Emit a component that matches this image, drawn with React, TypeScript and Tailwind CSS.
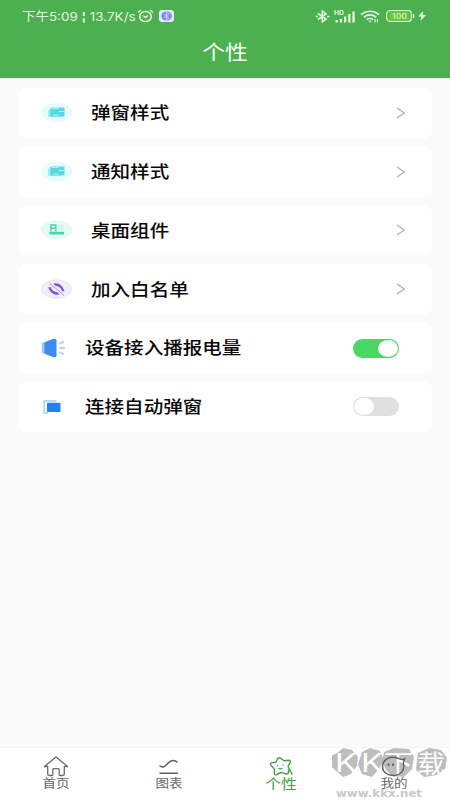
import { useState } from 'react'
import type { ReactNode } from 'react'

const FONT = "font-['Inter','Noto_Sans_CJK_SC',sans-serif]"

function CardIcon() {
  return (
    <svg width="32" height="20" viewBox="0 0 32 20">
      <ellipse cx="16.500" cy="9.500" rx="15.300" ry="9" fill="#e9fcfd" stroke="#dcf7f9" strokeWidth=".7" />
      <rect x="8" y="6.500" width="13" height="7.500" rx="1" fill="#a5eff3" />
      <rect x="10.300" y="4.500" width="14.200" height="9" rx=".8" fill="#58d8e1" />
      <path d="M11 5.300h8M19 8.500h5M13 12h6" stroke="#b5f3f6" strokeWidth="1" />
    </svg>
  )
}

function WidgetIcon() {
  return (
    <svg width="32" height="20" viewBox="0 0 32 20">
      <ellipse cx="16.500" cy="10" rx="15.300" ry="9" fill="#e5faf5" stroke="#d9f5ee" strokeWidth=".7" />
      <path d="M10.800 11.500V5h5v6.500M10.800 8.300h5" stroke="#50d0a8" strokeWidth="1.400" fill="none" />
      <path d="M18 5h5v1.500h-5zM18 8h5v1.200h-5z" fill="#c3f1e3" />
      <rect x="9.500" y="11.800" width="14.500" height="2.700" fill="#50d0a8" />
    </svg>
  )
}

function WhitelistIcon() {
  return (
    <svg width="32" height="20" viewBox="0 0 32 20">
      <ellipse cx="16.500" cy="10" rx="15.300" ry="9.300" fill="#f1edfb" stroke="#e7e0f7" strokeWidth=".7" />
      <path d="M13.500 4.500c5-1.200 9 1.500 11 7.500l-2.300.4c-1.200-3.700-3.700-5.400-7-5.700zM19.500 15.500c-5 1.200-9.300-1.500-11.300-7l2.300-.4c1.500 3.400 3.800 4.900 7 5.200z" fill="#7660cc" />
      <path d="M9.500 4l14.500 12.500" stroke="#a296dc" strokeWidth="1" />
    </svg>
  )
}

function SpeakerIcon() {
  return (
    <svg width="26" height="20" viewBox="0 0 26 20">
      <path d="M2 4.500h4v11H2.500Q1.800 15.500 1.800 14.500V5Z" fill="#94c5fb" />
      <path d="M4.500 4.300 13.500.8q3-.6 3 1.500v15.400q0 2.200-3 1.500L4.500 15.700Z" fill="#3d8bf3" />
      <path d="M19 6l5-2.600M19.300 10h5.500M19 14l5 2.300" stroke="#9cc6ee" strokeWidth="1.300" />
    </svg>
  )
}

function WindowIcon() {
  return (
    <svg width="20" height="16" viewBox="0 0 20 16" className="ml-[2px]">
      <path d="M14 2H2.200v12H6" fill="none" stroke="#b5d7fb" strokeWidth="1.800" />
      <rect x="5" y="3.800" width="13.500" height="9.200" rx=".8" fill="#2680f4" />
    </svg>
  )
}

function Toggle({ on, onClick }: { on: boolean; onClick: () => void }) {
  return (
    <button
      onClick={onClick}
      className={`flex h-[19px] w-[46px] items-center rounded-full px-px ${on ? 'justify-end bg-[#4bd763]' : 'justify-start bg-[#e0e0e0]'}`}
    >
      <span className="h-[17px] w-[20px] rounded-[50%] bg-white" />
    </button>
  )
}

function Row({ icon, label, children, wide }: { icon: ReactNode; label: string; children: ReactNode; wide?: boolean }) {
  return (
    <div className="flex h-[49.8px] items-center rounded-lg bg-white pl-[22px] pr-[33px]">
      <div className={`flex shrink-0 items-center ${wide ? 'w-[45px]' : 'w-[51px]'}`}>{icon}</div>
      <span className="origin-left scale-x-[1.15] whitespace-nowrap pt-[2px] text-[17px] font-medium text-[#080808]">{label}</span>
      <div className="ml-auto">{children}</div>
    </div>
  )
}

function Chevron() {
  return (
    <svg width="10" height="12" viewBox="0 0 10 12" className="mr-[-7px]">
      <path d="M1 1l7.200 5L1 11" fill="none" stroke="#b4b4b4" strokeWidth="1.400" />
    </svg>
  )
}

function StatusBar() {
  return (
    <div className="flex h-8 items-center pl-[22px] pr-[24px] text-[#e2f7df]">
      <div className="w-[113px]">
        <span className="block w-max origin-left scale-x-[1.120] whitespace-nowrap pt-px text-[12px] leading-none">
          下午5:09 <b>¦</b> 13.7K/s
        </span>
      </div>
      <svg width="17" height="14" viewBox="0 0 17 14" className="ml-[2px]" fill="none" stroke="currentColor" strokeWidth="1.500">
        <ellipse cx="8.500" cy="7.500" rx="5.800" ry="5.100" />
        <path d="M1 3.500 4 1M16 3.500 13 1M6 6.500l2.500 2L11 6.500" />
      </svg>
      <svg width="15" height="12" viewBox="0 0 15 12" className="ml-[5px]">
        <rect width="15" height="12" rx="3" fill="#dcecff" />
        <ellipse cx="7.500" cy="6" rx="5.300" ry="4.600" fill="#8585e8" />
        <path d="M5 4l5 4-2.500 1.700V2.300L10 4 5 8" fill="none" stroke="#d4d4ff" strokeWidth=".8" />
      </svg>
      <svg width="15" height="13" viewBox="0 0 15 13" className="ml-auto" fill="none" stroke="currentColor" strokeWidth="1.600">
        <path d="M3 3.500 11 9l-3.700 3V1L11 4 3 9.500M.7 6.500h2.300M12 6.500h2.500" />
      </svg>
      <svg width="22" height="13" viewBox="0 0 22 13" className="ml-[4px]" fill="currentColor">
        <text x="0" y="5" fontSize="5.500" fontWeight="700" textLength="10" lengthAdjust="spacingAndGlyphs">HD</text>
        <path d="M1.500 10h2.300v2.500H1.500zM5.800 9h2.300v3.500H5.800zM10 6.500h2.300v6H10zM14.200 4h2.300v8.500h-2.300zM18.400 1.500h2.300v11h-2.300z" />
      </svg>
      <svg width="20" height="13" viewBox="0 0 20 13" className="ml-[4px]" fill="none" stroke="currentColor" strokeWidth="1.700">
        <path d="M1 4.500Q10-2 19 4.500M3.800 7.200q6.200-4.500 12.400 0M6.700 9.600q3.300-2.200 6.600 0" />
        <path d="M8.300 10.800h3.400L10 12.600z" fill="currentColor" stroke="none" />
        <path d="M15 9v3.500M17.500 9v3.500" strokeWidth="1.100" />
      </svg>
      <svg width="29" height="12" viewBox="0 0 29 12" className="ml-[6px]">
        <rect x=".7" y=".7" width="24.600" height="10.600" rx="3" fill="none" stroke="#d8f5cb" strokeWidth="1.200" />
        <rect x="2.500" y="2.300" width="21" height="7.400" rx="1.500" fill="#6ac837" />
        <text x="6" y="8.700" fontSize="7.500" fontWeight="500" fill="#d5f7bd" textLength="15" lengthAdjust="spacingAndGlyphs">100</text>
        <path d="M27.500 4v4" stroke="#d8f5cb" strokeWidth="1.600" />
      </svg>
      <svg width="8" height="10" viewBox="0 0 8 10" className="ml-[3px]">
        <path d="M5 0 .2 5.600h3L2.500 10 8 4H4.800z" fill="currentColor" />
      </svg>
    </div>
  )
}

function HomeIcon() {
  return (
    <svg width="26" height="21" viewBox="0 0 26 21" fill="none" stroke="#6a6a6a" strokeWidth="1.300" strokeLinejoin="round">
      <path d="M13 1 1.500 10.500h3.200V18q0 1.500 1.500 1.500h2.600q1 0 1-1v-4.800q0-1 1-1h4.400q1 0 1 1v4.800q0 1 1 1h2.600q1.500 0 1.500-1.500v-7.500h3.200z" />
    </svg>
  )
}

function ChartIcon() {
  return (
    <svg width="22" height="16" viewBox="0 0 22 16" fill="none" stroke="#626262" strokeWidth="1.500">
      <path d="M1.500 6.500c6 5.500 8-6 14-5 2 .2 2.800 1 4 1.800M1.500 14.200h18.500" />
    </svg>
  )
}

function StarIcon() {
  return (
    <svg width="24" height="19" viewBox="0 0 24 19" fill="none" stroke="#43a047" strokeWidth="1.400" strokeLinejoin="round">
      <path d="M19.500 12.500V15q0 2.500-2.700 1.800l-4.500-1.500-4.500 2.200q-2.600.8-2.500-1.600l.2-3.800L2 8.200Q.8 6 3 5.600l4-.3 1.500-3.500Q10 0 12 1.500l3 2.300 4.800-.5q2.300.3 1.200 2.600l-2 3.600 4.300 8.200" />
      <path d="M8.500 8v1.300M14 7.500v1.300M9.500 11.300q2 1.200 3.700-.3" strokeWidth="1.100" />
    </svg>
  )
}

function MineIcon() {
  return (
    <svg width="25" height="21" viewBox="0 0 25 21" fill="none" stroke="#5e5e5e" strokeWidth="1.400">
      <path d="M17.500 2.500C9-1 1.500 3.500 1.500 10.500c0 5.500 4.500 9 10.800 9 7.200 0 12-5 10-12 .2-2 .9-3.300 1.300-4.700-2 .9-4 .8-6.100-.3z" />
      <path d="M7.500 7.500v2.500M12 7.500v2.500" strokeWidth="1.700" />
    </svg>
  )
}

const tabs = [
  { label: '首页', icon: <HomeIcon /> },
  { label: '图表', icon: <ChartIcon /> },
  { label: '个性', icon: <StarIcon /> },
  { label: '我的', icon: <MineIcon /> },
]

function Watermark() {
  return (
    <svg width="116" height="52" viewBox="0 0 116 52" className="pointer-events-none absolute right-[2px] bottom-0">
      <g fill="#bdbdbd">
        <path d="M5 5 11 0l9 2 6 7-1 9-6 8-8 3-7-6-7-7 1-8z" />
        <path d="M30 4 38 0l10 3 4 9-5 9-7 8-10-3-4-9z" />
        <path d="M52 4 62 0l15 1 5 8-2 12-8 8-12-1-6-6-4-8z" />
        <path d="M86 5 97 0l12 2 6 8-2 11-8 6-13 2-8-7 1-10z" />
      </g>
      <g fill="#fff" fontSize="25" fontWeight="400">
        <text x="3" y="24" textLength="22" lengthAdjust="spacingAndGlyphs">K</text>
        <text x="29" y="24" textLength="22" lengthAdjust="spacingAndGlyphs">K</text>
        <text x="52" y="25" textLength="29" lengthAdjust="spacingAndGlyphs">下</text>
        <text x="85" y="25" textLength="28" lengthAdjust="spacingAndGlyphs">载</text>
      </g>
      <text x="4" y="48.500" fontSize="10.500" fontWeight="700" fill="#c8c8c8" textLength="86" lengthAdjust="spacingAndGlyphs" fontFamily="DejaVu Sans">
        www.kkx.net
      </text>
    </svg>
  )
}

export default function App() {
  const [broadcast, setBroadcast] = useState(true)
  const [autoPopup, setAutoPopup] = useState(false)

  return (
    <div className={`flex h-[800px] w-[450px] flex-col overflow-hidden bg-[#fafafa] ${FONT}`}>
      <header className="h-[78px] shrink-0 bg-[#4caf50]">
        <StatusBar />
        <h1 className="mt-[5px] scale-x-[1.14] text-center text-[20px] leading-8 text-[#f2fff0]">个性</h1>
      </header>

      <main className="flex flex-1 flex-col gap-[9px] px-[18px] pt-[10px]">
        <Row icon={<CardIcon />} label="弹窗样式"><Chevron /></Row>
        <Row icon={<CardIcon />} label="通知样式"><Chevron /></Row>
        <Row icon={<WidgetIcon />} label="桌面组件"><Chevron /></Row>
        <Row icon={<WhitelistIcon />} label="加入白名单"><Chevron /></Row>
        <Row icon={<SpeakerIcon />} label="设备接入播报电量" wide>
          <Toggle on={broadcast} onClick={() => setBroadcast(!broadcast)} />
        </Row>
        <Row icon={<WindowIcon />} label="连接自动弹窗" wide>
          <Toggle on={autoPopup} onClick={() => setAutoPopup(!autoPopup)} />
        </Row>
      </main>

      {/* Bottom tabs */}
      <nav className="relative grid h-[52px] shrink-0 grid-cols-4 bg-white shadow-[0_-1px_0_#f5f5f5]">
        <Watermark />
        {tabs.map((tab) => (
          <div key={tab.label} className="relative flex flex-col items-center pt-[8px]">
            <div className="flex h-[21px] items-center">{tab.icon}</div>
            <span
              className={`scale-x-[1.13] leading-[13px] ${tab.label === '个性' ? 'text-[14px] text-[#43a047]' : 'text-[12px] text-[#666]'}`}
            >
              {tab.label}
            </span>
          </div>
        ))}
      </nav>
    </div>
  )
}
